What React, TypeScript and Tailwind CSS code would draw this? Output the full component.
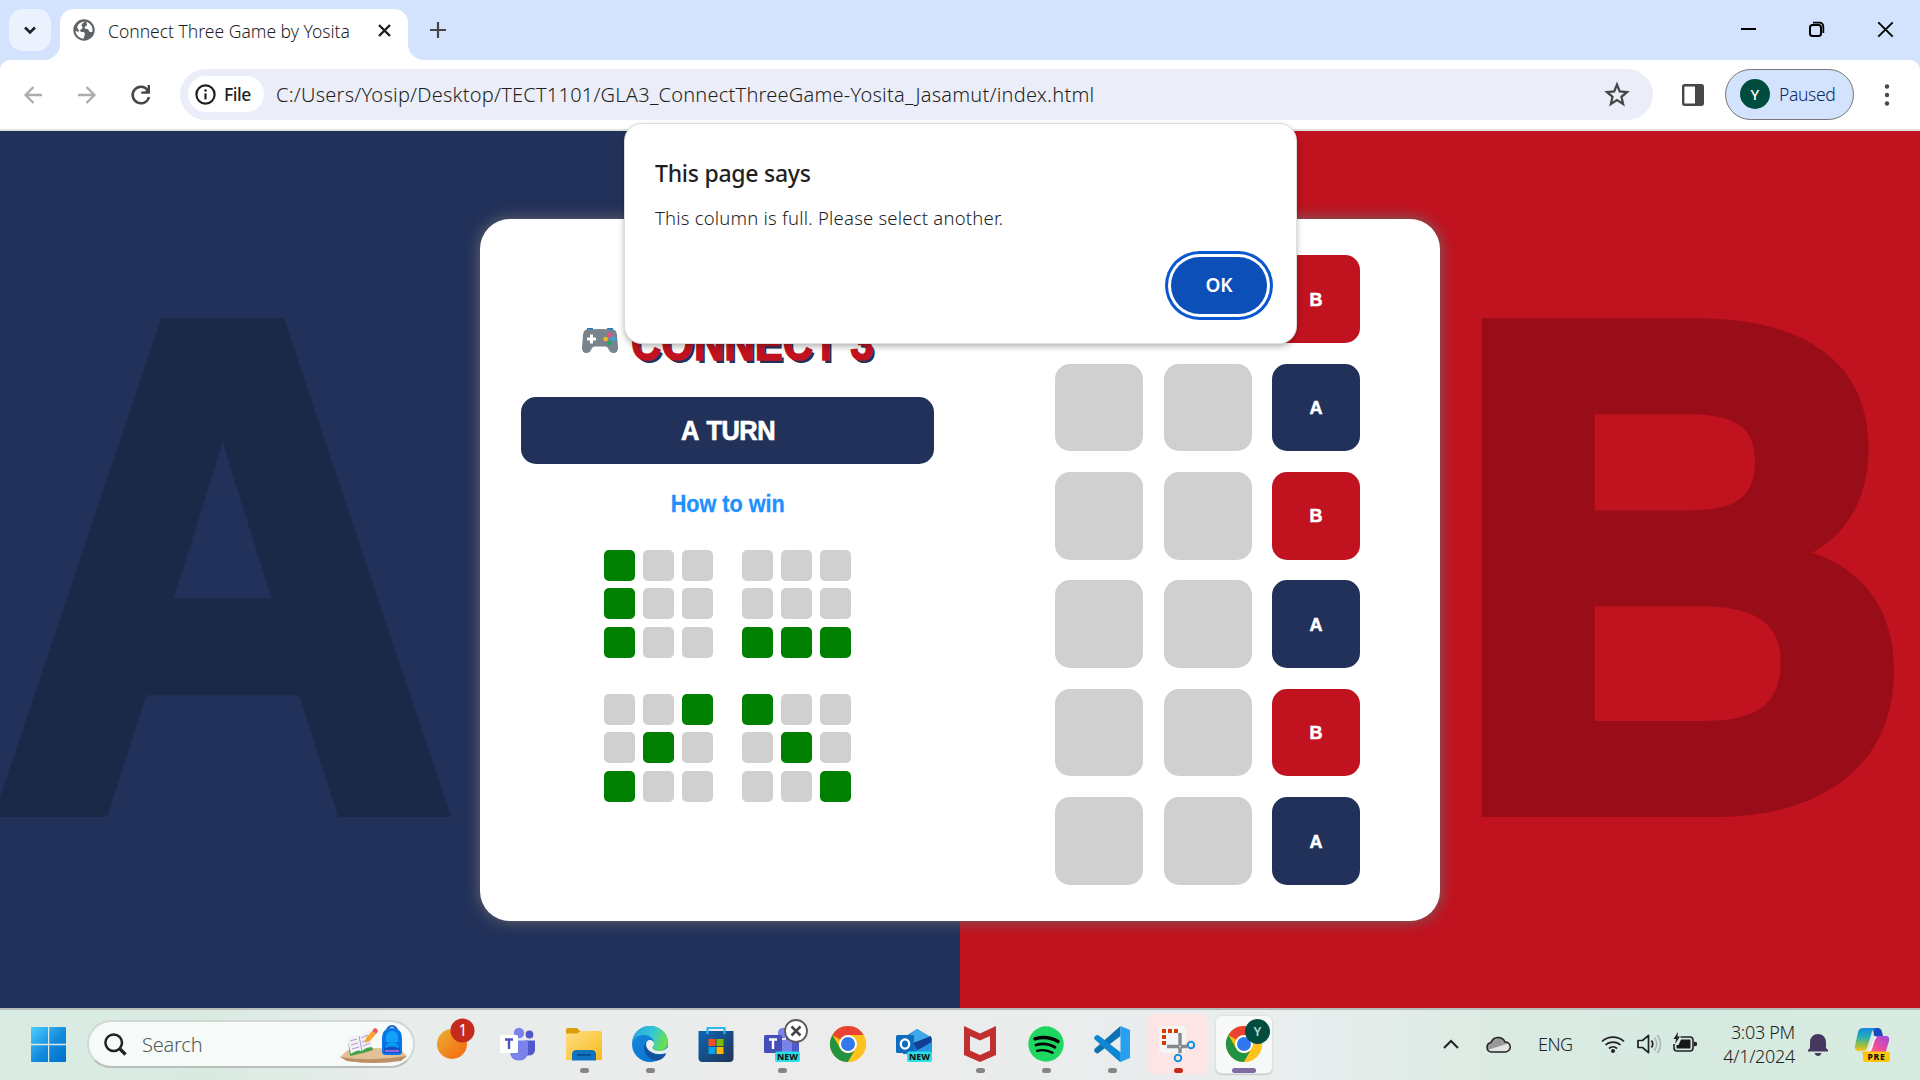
import type { ReactNode } from "react";

const ui = "font-['Noto_Sans','Open_Sans',sans-serif]";

function Svg({ w = 36, h = 36, vb, children, cls = "" }: { w?: number; h?: number; vb?: string; children: ReactNode; cls?: string }) {
  return (
    <svg width={w} height={h} viewBox={vb ?? `0 0 ${w} ${h}`} className={`block shrink-0 overflow-visible ${cls}`} fill="none">
      {children}
    </svg>
  );
}

function TabStrip() {
  return (
    <div className="flex h-[60px] w-full items-start bg-[#d3e3fd]">
      <div className="ml-[9px] mt-[9px] flex h-[42px] w-[42px] items-center justify-center rounded-[14px] bg-[#ebf2fe]">
        <Svg w={14} h={10}><path d="M2 2.5l5 5 5-5" stroke="#1f1f1f" strokeWidth="2.6" /></Svg>
      </div>
      <div className="relative ml-[9px] mt-[9px] flex h-[51px] w-[348px] items-center rounded-t-[14px] bg-white">
        <Svg w={16} h={16} cls="absolute -left-4 bottom-0"><path d="M16 0v16H0A16 16 0 0 0 16 0z" fill="#fff" /></Svg>
        <Svg w={16} h={16} cls="absolute -right-4 bottom-0"><path d="M0 0v16h16A16 16 0 0 1 0 0z" fill="#fff" /></Svg>
        <Svg w={22} h={22} cls="-mt-2.5 ml-[13px]">
          <circle cx="11" cy="11" r="10.7" fill="#5f6368" />
          <path d="M12 2.6c-1.2 1.2-3 1.6-3.4 3.2-.3 1.5 1.3 1.8.8 3.2-.4 1.3-2.2.9-2.3 2.6 0 1.400 1.400 1.400 3 1.500 2 .2 2 2 1.300 3.600-.5 1.200-.6 2.200-.8 3A8.600 8.600 0 0 1 2.400 11.800c1.500 1 3 1.200 4 .1L4 8.400A8.700 8.700 0 0 1 12 2.600z" fill="#fff" />
          <path d="M13.500 2.800a8.600 8.600 0 0 1 6 9.600c-.9.8-2.300.8-3.200 0-1-.9-.6-2-1.900-2.300-1.600-.3-3-.6-2.800-1.900.2-1.200 1.700-.9 2.300-1.900.6-1.100-.8-1.800-.4-3.500z" fill="#fff" />
        </Svg>
        <span className={`${ui} -mt-[7px] ml-[13px] w-[243px] whitespace-nowrap text-[17.500px] font-[350] leading-6 text-[#1f1f1f]`}>Connect Three Game by Yosita</span>
        <Svg w={13} h={13} cls="-mt-2 ml-[27px]"><path d="M1 1l11 11M12 1L1 12" stroke="#1f1f1f" strokeWidth="2.4" /></Svg>
      </div>
      <Svg w={16} h={16} cls="ml-[22px] mt-[22px]"><path d="M8 0v16M0 8h16" stroke="#474747" strokeWidth="2.2" /></Svg>
      <div className="ml-auto mr-[27px] mt-[21px] flex">
        <Svg w={16} h={16} cls="mr-[52px]"><path d="M1 8h15" stroke="#000" strokeWidth="2" /></Svg>
        <Svg w={16} h={16} cls="mr-[53px]">
          <rect x="2" y="4" width="11" height="11" rx="2.5" stroke="#000" strokeWidth="2" />
          <path d="M5 1.600h6.500a3.800 3.800 0 0 1 3.800 3.800V12" stroke="#000" strokeWidth="1.800" />
        </Svg>
        <Svg w={16} h={16}><path d="M1.300 1.300l14.400 14.400M15.700 1.300L1.300 15.700" stroke="#000" strokeWidth="1.900" /></Svg>
      </div>
    </div>
  );
}

function Toolbar() {
  return (
    <div className="flex h-[71px] w-full bg-[#d3e3fd]">
      <div className="flex h-[71px] w-full items-center rounded-t-[10px] border-b-2 border-[#dfe3df] bg-white">
        <Svg w={18} h={18} cls="ml-6"><path d="M18 9H2M9.500 1L1.600 9l7.900 8" stroke="#adadad" strokeWidth="2.400" /></Svg>
        <Svg w={18} h={18} cls="ml-9"><path d="M0 9h16M8.500 1l7.900 8-7.900 8" stroke="#adadad" strokeWidth="2.400" /></Svg>
        <Svg w={20} h={20} cls="ml-[35px]">
          <path d="M16.600 5A8.300 8.300 0 1 0 18 12" stroke="#474747" strokeWidth="2.500" />
          <path d="M17.800 0v7.600h-7.600" stroke="#474747" strokeWidth="2.400" />
          <path d="M18.500 2v6h-6z" fill="#474747" />
        </Svg>
        <div className="-mt-px ml-[29px] flex h-[51px] w-[1473px] items-center rounded-full bg-[#ebeef8]">
          <div className="ml-2 flex h-9 w-[76px] items-center rounded-full bg-white">
            <Svg w={21} h={21} cls="ml-[7px]">
              <circle cx="10.500" cy="10.500" r="9.100" stroke="#1f1f1f" strokeWidth="2.200" />
              <path d="M10.500 9.400v6" stroke="#1f1f1f" strokeWidth="2.200" />
              <circle cx="10.500" cy="6.500" r="1.300" fill="#1f1f1f" />
            </Svg>
            <span className={`${ui} ml-2 text-[17.500px] font-medium leading-6 tracking-[-0.500px] text-[#1f1f1f]`}>File</span>
          </div>
          <span className={`${ui} ml-3 mt-0.5 whitespace-nowrap text-[20px] font-[350] leading-7 tracking-[0.230px] text-[#1f1f1f]`}>C:/Users/Yosip/Desktop/TECT1101/GLA3_ConnectThreeGame-Yosita_Jasamut/index.html</span>
          <Svg w={24} h={24} vb="2 1.500 20 20" cls="ml-auto mr-6">
            <path d="M12 3.700l2.300 5.700 6 .5-4.600 3.900 1.400 6L12 16.600l-5.100 3.200 1.400-6L3.700 9.900l6-.5z" stroke="#474747" strokeWidth="1.900" />
          </Svg>
        </div>
        <Svg w={22} h={22} cls="ml-[29px]">
          <rect x="1.200" y="1.200" width="19.600" height="19.600" rx="1.500" stroke="#474747" strokeWidth="2.400" />
          <path d="M13 1h8v20h-8z" fill="#474747" />
        </Svg>
        <div className="-mt-px ml-[21px] flex h-[51px] w-[129px] items-center rounded-full border border-[#747775] bg-[#d3e3fd]">
          <span className={`${ui} ml-3.5 flex h-[30px] w-[30px] items-center justify-center rounded-full bg-[#004d40] text-[15px] font-medium text-white`}>Y</span>
          <span className={`${ui} ml-[9px] text-[17.500px] font-[350] leading-6 tracking-[-0.350px] text-[#0a2a66]`}>Paused</span>
        </div>
        <Svg w={6} h={22} cls="ml-[30px]">
          <circle cx="3" cy="2.500" r="2.200" fill="#474747" /><circle cx="3" cy="11" r="2.200" fill="#474747" /><circle cx="3" cy="19.500" r="2.200" fill="#474747" />
        </Svg>
      </div>
    </div>
  );
}

const patterns = [
  [1, 0, 0, 1, 0, 0, 1, 0, 0],
  [0, 0, 0, 0, 0, 0, 1, 1, 1],
  [0, 0, 1, 0, 1, 0, 1, 0, 0],
  [1, 0, 0, 0, 1, 0, 0, 0, 1],
];

function Mini({ cells }: { cells: number[] }) {
  return (
    <div className="grid grid-cols-[31px_31px_31px] gap-[7.800px]">
      {cells.map((c, i) => (
        <div key={i} className={c ? "h-[31px] rounded-[5px] bg-[#008000]" : "h-[31px] rounded-[5px] bg-[#d0d0d0]"} />
      ))}
    </div>
  );
}

const rows = ["B", "A", "B", "A", "B", "A"];

function Gamepad() {
  return (
    <Svg w={36} h={26} cls="mb-[11px] -ml-px">
      <path d="M5 0h6v4H5zM25 0h6v4h-6z" fill="#1c7fd0" />
      <path d="M5 1.500Q18 .3 31 1.500q3.500.4 4 5.500l1 12.500q0 5.500-4.500 5.500-3.500 0-5-4-1-2.500-3-2.500h-11q-2 0-3 2.500-1.500 4-5 4Q0 25 0 19.500L1 7q.5-5.100 4-5.500z" fill="#78838c" />
      <path d="M9.500 6.500v9M5 11h9" stroke="#fff" strokeWidth="3" />
      <circle cx="27.500" cy="7" r="2.300" fill="#f0508a" /><circle cx="23.700" cy="11" r="2.300" fill="#f5b921" />
      <circle cx="31.300" cy="11" r="2.300" fill="#2aa7ee" /><circle cx="27.500" cy="15" r="2.300" fill="#1fa463" />
    </Svg>
  );
}

function Game() {
  return (
    <div className="relative flex h-[877px] w-full font-['Liberation_Sans',Arial,sans-serif] font-bold">
      <div className="flex w-1/2 bg-[#22315a]">
        <span className="-ml-2 mt-[35px] block h-[800px] w-[480px] origin-left scale-x-[0.922] text-[693px] leading-[800px] text-[#1b2847] [-webkit-text-stroke:22px_#1b2847]">A</span>
      </div>
      <div className="flex w-1/2 justify-end bg-[#c1121f]">
        <span className="mt-[35px] block h-[800px] w-[471px] origin-left scale-x-[0.927] text-[693px] leading-[800px] text-[#990d18] [-webkit-text-stroke:22px_#990d18]">B</span>
      </div>
      <div className="absolute left-[480px] top-[88px] flex h-[702px] w-[960px] rounded-[30px] bg-white shadow-[0_0_15px_#696969]">
        <div className="flex w-[495px] flex-col items-center">
          <div className="mt-[96px] flex h-[50px] w-[290px] items-end">
            <Gamepad />
            <span className="ml-[13px] block origin-left scale-x-[0.840] whitespace-nowrap text-[50px] font-black leading-[43px] text-[#c1121f] [-webkit-text-stroke:1.500px_#c1121f] [text-shadow:3px_3px_0_#22315a]">CONNECT 3</span>
          </div>
          <div className="mt-8 flex h-[67px] w-[413px] items-center justify-center rounded-[15px] bg-[#22315a]">
            <span className="mt-0.5 scale-x-[0.940] text-[27px] tracking-[-0.500px] text-white [-webkit-text-stroke:0.700px_white] [word-spacing:2px]">A TURN</span>
          </div>
          <div className="mt-[25px] scale-x-[0.940] text-[23px] leading-[30px] text-[#1e90ff] [-webkit-text-stroke:0.300px_#1e90ff]">How to win</div>
          <div className="mt-[30.500px] grid grid-cols-[108.600px_108.600px] gap-x-[29.800px] gap-y-[35.500px]">
            {patterns.map((p, i) => <Mini key={i} cells={p} />)}
          </div>
        </div>
        <div className="ml-20 mt-[36.300px] grid h-fit grid-cols-[88px_88px_88px] gap-x-[20.500px] gap-y-[20.900px]">
          {rows.map((r, i) => [
            <div key={`${i}l`} className="h-[87.500px] rounded-[15px] bg-[#d0d0d0]" />,
            <div key={`${i}m`} className="h-[87.500px] rounded-[15px] bg-[#d0d0d0]" />,
            <div key={`${i}r`} className={r === "A" ? "flex h-[87.500px] items-center justify-center rounded-[15px] bg-[#22315a] pt-0.5 text-[18px] text-white [-webkit-text-stroke:0.500px_white]" : "flex h-[87.500px] items-center justify-center rounded-[15px] bg-[#c1121f] pt-0.5 text-[18px] text-white [-webkit-text-stroke:0.500px_white]"}>{r}</div>,
          ])}
        </div>
      </div>
      <div className={`${ui} absolute left-[625px] top-[-7px] flex h-[219px] w-[671px] flex-col rounded-[17px] bg-white px-[30px] font-normal text-[#1f1f1f] shadow-[0_0_0_1px_#dedede,0_3px_7px_rgba(0,0,0,0.350)]`}>
        <div className="mt-[33px] text-[23px] font-medium leading-8 tracking-[-0.260px]">This page says</div>
        <div className="mt-[17px] text-[18.500px] font-[350] leading-6 tracking-[0.210px]">This column is full. Please select another.</div>
        <div className="-mr-px mt-[27px] flex h-[57px] w-[96px] items-center justify-center self-end rounded-full bg-[#0d4fb9] text-[19px] font-semibold text-white shadow-[0_0_0_3px_white,0_0_0_6px_#0b57d0]">OK</div>
      </div>
    </div>
  );
}

function ChromeIcon() {
  return (
    <Svg>
      <circle cx="18" cy="18" r="18" fill="#fbbc05" />
      <path d="M18 0A18 18 0 0 1 33.600 9H18a9 9 0 0 0-7.800 4.500L2.400 9A18 18 0 0 1 18 0z" fill="#ea4335" />
      <path d="M2.400 9A18 18 0 0 0 18 36l7.800-13.500A9 9 0 0 1 10.200 22.500z" fill="#229342" />
      <path d="M33.600 9A18 18 0 0 1 18 36l7.800-13.500A9 9 0 0 0 18 9z" fill="#fcc31e" />
      <circle cx="18" cy="18" r="9" fill="#fff" /><circle cx="18" cy="18" r="7" fill="#3178ee" />
    </Svg>
  );
}

function NewTag({ x }: { x: number }) {
  return (
    <>
      <rect x={x} y="25.500" width="25" height="10.500" rx="2" fill="#28e0e3" />
      <text x={x + 12.500} y="34" textAnchor="middle" fontSize="8.800" fontWeight="800" fill="#111" fontFamily="Noto Sans">NEW</text>
    </>
  );
}

const icons: { dot?: string; active?: string; node: ReactNode }[] = [
  {
    node: (
      <Svg>
        <defs><linearGradient id="org" x1="0" y1="0" x2="1" y2="1"><stop stopColor="#e9b232" /><stop offset="1" stopColor="#f6650d" /></linearGradient></defs>
        <circle cx="18" cy="18" r="15" fill="url(#org)" />
        <circle cx="28.500" cy="4.500" r="12" fill="#c42b1c" />
        <text x="29" y="10" textAnchor="middle" fontSize="15.500" fill="#fff" fontFamily="Noto Sans">1</text>
      </Svg>
    ),
  },
  {
    node: (
      <Svg>
        <circle cx="19" cy="7" r="5.200" fill="#7b83eb" /><circle cx="29.500" cy="8.500" r="3.900" fill="#5059c9" />
        <path d="M25 14.500h10v9q0 6-7 6h-3z" fill="#5059c9" />
        <path d="M10 14.500h18v11q0 9-9 9t-9-9z" fill="#7b83eb" />
        <rect x="0" y="9" width="18" height="18" rx="1.500" fill="#fff" />
        <path d="M5 13.500h8M9 13.500v9.500" stroke="#4b53bc" strokeWidth="2.400" />
      </Svg>
    ),
  },
  {
    dot: "gray",
    node: (
      <Svg>
        <defs><linearGradient id="fol" x1="0" y1="0" x2="1" y2="1"><stop stopColor="#ffe084" /><stop offset="1" stopColor="#f8b91c" /></linearGradient></defs>
        <path d="M0 4q0-2 2-2h9l4 4v5H0z" fill="#dc9f0b" />
        <path d="M0 7.500h11l4-2.500h19q2 0 2 2v27H0z" fill="url(#fol)" />
        <path d="M6 34.500v-6q0-4.500 4.500-4.500h15q4.500 0 4.500 4.500v6z" fill="#0f73bf" />
        <path d="M11 29h14" stroke="#0a4f92" strokeWidth="2" />
      </Svg>
    ),
  },
  {
    dot: "gray",
    node: (
      <Svg>
        <defs>
          <linearGradient id="e1" x1="0" y1="0" x2="1" y2=".3"><stop stopColor="#259fe0" /><stop offset=".6" stopColor="#35c9d5" /><stop offset="1" stopColor="#67df55" /></linearGradient>
          <linearGradient id="e2" x1="0" y1="0" x2=".6" y2="1"><stop stopColor="#168ce0" /><stop offset="1" stopColor="#0a72ce" /></linearGradient>
        </defs>
        <circle cx="18" cy="18" r="18" fill="url(#e2)" />
        <path d="M.3 16C1 6 9 0 18 0c11 0 18 8 18 15.500 0 6-4 9.500-9 9.500-5 0-6.500-2-6.500-3s1.500-1.500 1.500-4.500C22 12 17 9 12 9 7 9 2.500 11 .3 16z" fill="url(#e1)" />
        <path d="M14.500 16c-2 2-3 5-2 9 1.500 5.500 7 9.500 13 9.500 3 0 7-3 8.800-7-2 .8-4 1.200-6.500 1.200-7 0-12-4-13.300-12.700z" fill="#11529c" />
        <path d="M14 18.500c0-2.500 1.700-4.500 4-4.500 3 0 4.300 2.500 4 4.500-.3 2-1.500 2-1.500 3 0 2 3 3.500 6.500 3.500 3.500 0 6.500-1.200 8.500-3.500l.8.500-2 4.500c-2 1.200-5.200 1.700-8 1.500-7-.5-12.300-4.500-12.300-9.500z" fill="#eceeee" />
      </Svg>
    ),
  },
  {
    node: (
      <Svg>
        <defs><linearGradient id="sto" x1="0" y1="0" x2="1" y2="1"><stop stopColor="#0b66b5" /><stop offset="1" stopColor="#233355" /></linearGradient></defs>
        <path d="M.5 5h35v27q0 4-4 4h-27q-4 0-4-4z" fill="url(#sto)" />
        <path d="M9.500 8V2h17v6" stroke="#2bb8ef" strokeWidth="2.200" />
        <path d="M10.500 13h7v7h-7z" fill="#f25022" /><path d="M18.500 13h7v7h-7z" fill="#7fba00" /><path d="M10.500 21h7v7h-7z" fill="#00a4ef" /><path d="M18.500 21h7v7h-7z" fill="#ffb900" />
      </Svg>
    ),
  },
  {
    dot: "gray",
    node: (
      <Svg>
        <circle cx="19" cy="7" r="5.200" fill="#7b83eb" />
        <path d="M22 12h13v14H22z" fill="#5059c9" /><path d="M12 14h16v13H12z" fill="#7b83eb" />
        <rect x="0" y="9" width="18" height="18" rx="1.500" fill="#464eb8" />
        <path d="M5 13.500h8M9 13.500v9.500" stroke="#fff" strokeWidth="2.400" />
        <NewTag x={11} />
        <circle cx="32" cy="5" r="11" fill="#fff" stroke="#5b5b5b" strokeWidth="1.800" />
        <path d="M27.500.5l9 9M36.500.5l-9 9" stroke="#444" strokeWidth="2.500" />
      </Svg>
    ),
  },
  { node: <ChromeIcon /> },
  {
    node: (
      <Svg>
        <path d="M7 12L21 3l15 9v16H7z" fill="#1577cb" />
        <path d="M11 11l10-8 14 8-16 9z" fill="#40a8e8" />
        <path d="M17 17L35 10v6L22 25z" fill="#123f91" />
        <path d="M20 25l16-9v14H20z" fill="#2398e3" />
        <rect x="0" y="9" width="18" height="18" rx="1.500" fill="#0f6cbd" />
        <ellipse cx="9" cy="18" rx="4.200" ry="4.700" stroke="#fff" strokeWidth="2.300" />
        <NewTag x={11} />
      </Svg>
    ),
  },
  { dot: "gray", node: <Svg><path d="M2 0l16 7.500L34 0v29L18 36 2 29zM8 10v14.500l10 4.500 10-4.500V10l-10 4.500z" fill="#c12f30" fillRule="evenodd" /></Svg> },
  {
    dot: "gray",
    node: (
      <Svg>
        <circle cx="18" cy="18" r="17.700" fill="#1ed760" />
        <path d="M7 12.800c8-2.300 16-1.300 23 2.600" stroke="#000" strokeWidth="3.400" strokeLinecap="round" />
        <path d="M8 19c7-2 13.500-1 19 2.300" stroke="#000" strokeWidth="2.800" strokeLinecap="round" />
        <path d="M9 24.800c5.500-1.400 11-.8 15.500 2" stroke="#000" strokeWidth="2.300" strokeLinecap="round" />
      </Svg>
    ),
  },
  {
    dot: "gray",
    node: (
      <Svg>
        <path d="M26.500 0v10L4.500 27q-1.500 1-3-.5l-1-1q-1-1.500.5-3z" fill="#0b72b5" />
        <path d="M.8 13.500q-1.500-1.500 0-3l1-1q1.300-1 3 0l22 17V36q-1 0-2-1z" fill="#0f87d2" />
        <path d="M26.500 0L36 4v28l-9.500 4z" fill="#27a0f0" />
      </Svg>
    ),
  },
  {
    dot: "red",
    active: "pink",
    node: (
      <Svg>
        <rect x="-1" y="0" width="27" height="27" rx="3" fill="#f4f4f5" />
        <path d="M2 3h4v4H2zM8 3h4v4H8zM14 3h4v4h-4zM2 9h4v4H2zM2 15h4v4H2z" fill="#d83b01" />
        <path d="M20 7v20M7 20.500h20" stroke="#85898d" strokeWidth="3.400" />
        <circle cx="31" cy="19" r="3.300" stroke="#1592dc" strokeWidth="2" /><circle cx="18" cy="32" r="3.300" stroke="#1592dc" strokeWidth="2" />
        <circle cx="20" cy="20.500" r="1" fill="#ddd" />
      </Svg>
    ),
  },
  {
    dot: "violet",
    active: "white",
    node: (
      <div className="relative">
        <ChromeIcon />
        <span className={`${ui} absolute -right-2 -top-[7px] flex h-[25px] w-[25px] items-center justify-center rounded-full bg-[#004d40] text-[13px] font-semibold text-[#b9d5ce]`}>Y</span>
      </div>
    ),
  },
];

function TaskIcon({ icon }: { icon: (typeof icons)[number] }) {
  const bg = icon.active === "pink"
    ? "mt-1 flex h-[60px] w-[60px] flex-col items-center rounded-[6px] bg-[#fde5e6] pt-3"
    : icon.active === "white"
      ? "mt-1.5 flex h-[57px] w-[56px] flex-col items-center rounded-[6px] bg-[#f7f9f8] pt-2.5 shadow-[0_0_0_1px_#dfe3e1,0_1px_1px_1px_#c9c9c9]"
      : "mt-1 flex h-[60px] w-[60px] flex-col items-center pt-3";
  return (
    <div className="flex w-[66px] shrink-0 justify-center">
      <div className={bg}>
        {icon.node}
        {icon.dot && <div className={icon.dot === "violet" ? "mt-1.5 h-[5px] w-6 rounded-full bg-[#7f6ca1]" : icon.dot === "red" ? "mt-1.5 h-[5px] w-[9px] rounded-full bg-[#c42b1c]" : "mt-1.5 h-[5px] w-[9px] rounded-full bg-[#858585]"} />}
      </div>
    </div>
  );
}

function Taskbar() {
  return (
    <div className="flex h-[72px] w-full items-start border-t-2 border-[#b5bcb9] bg-[linear-gradient(90deg,#d9ece3_0%,#d9ebe1_11%,#e8eceb_20%,#ececec_45%,#e8edee_68%,#dbebe2_78%,#d6eae1_88%,#d8ebe0_100%)]">
      <Svg w={35} h={35} cls="ml-[31px] mt-[17px]">
        <defs><linearGradient id="win" gradientUnits="userSpaceOnUse" x1="0" y1="0" x2="35" y2="35"><stop stopColor="#4bcfff" /><stop offset=".55" stopColor="#1389dc" /><stop offset="1" stopColor="#0070cc" /></linearGradient></defs>
        <path d="M1 0h16v16.800H0V1q0-1 1-1zM18.200 0H34q1 0 1 1v15.800H18.200zM0 18.200h17V35H1q-1 0-1-1zM18.200 18.200H35V34q0 1-1 1H18.200z" fill="url(#win)" />
      </Svg>
      <div className="ml-[21px] mt-[10px] flex h-[48px] w-[328px] items-center rounded-full border-2 border-[#d2d8d5] border-b-[#b9bfbd] bg-[#f6faf8]">
        <Svg w={23} h={23} cls="ml-[15px]"><circle cx="9.700" cy="9.700" r="8.300" stroke="#222" strokeWidth="2.500" /><path d="M15.500 15.500l6 6" stroke="#222" strokeWidth="3.200" /></Svg>
        <span className={`${ui} ml-[15px] mt-0.5 text-[20px] font-[350] leading-7 tracking-[-0.200px] text-[#555b59]`}>Search</span>
        <Svg w={68} h={40} cls="ml-auto mr-[5px] mt-1">
          <path d="M0 31l8-7q26-4 53 0l6 6-6 4q-27 5-54 1z" fill="#e3c095" />
          <path d="M0 31q33 5 67-1l-6 5q-27 4-54 0z" fill="#bd8f66" />
          <path d="M8 15l2 15 13-3 10-3-1-3-3-15z" fill="#42a047" />
          <path d="M7 12q7-4 12-2 4-5 10-5l4 16q-7 0-11 4-5-2-11 3z" fill="#f3f0fa" />
          <path d="M19 10l3 15M10 15l7-2M11 19l7-2M12 23l7-2M21 12l7-3M22 16l7-3M23 20l7-3" stroke="#aaa1bd" />
          <path d="M25 17l1-5 6-7 4 3-6 7z" fill="#f6a531" /><path d="M32 5l2.500-3q3 0 3.500 3.500L36 8z" fill="#f25c63" />
          <path d="M47 3q5-6 10 0" stroke="#1768c5" strokeWidth="2" />
          <path d="M42 13q0-11 10-11t10 11v13q0 3-4 3H46q-4 0-4-3z" fill="#0876ea" />
          <path d="M46 12q0-7 6-7t6 7v4H46z" fill="#13a1f8" />
          <path d="M44 22q0-6 8-6t8 6v5H44z" fill="#1552c6" /><path d="M45 21q1-5 7-5t7 5v1q-7-3-14 0z" fill="#0b9af5" /><path d="M45 25h14" stroke="#a66de8" strokeWidth="1.800" />
        </Svg>
      </div>
      <div className="ml-1 flex">{icons.map((icon, i) => <TaskIcon key={i} icon={icon} />)}</div>
      <div className={`${ui} ml-auto flex h-[68px] items-center font-[350] text-[#1d2321]`}>
        <Svg w={16} h={10}><path d="M0 9l7-7 7 7" stroke="#222" strokeWidth="2" /></Svg>
        <Svg w={25} h={17} cls="ml-[26px]">
          <path d="M5.500 16A4.800 4.800 0 0 1 5 6.500 7.500 7.500 0 0 1 19 6a5 5 0 0 1 .5 10z" fill="#e5e5e5" />
          <path d="M1.500 14A4.800 4.800 0 0 1 5 6.500 7.500 7.500 0 0 1 19 6l3 1.500z" fill="#999" />
          <path d="M5.500 16A4.800 4.800 0 0 1 5 6.500 7.500 7.500 0 0 1 19 6a5 5 0 0 1 .5 10z" stroke="#222" strokeWidth="1.500" />
        </Svg>
        <span className="ml-[27px] w-[37px] text-[18px] tracking-[-0.500px]">ENG</span>
        <Svg w={24} h={18} cls="ml-[26px]"><path d="M1 6.500a16 16 0 0 1 22 0M4.500 10a11 11 0 0 1 15 0M8 13.500a6 6 0 0 1 8 0" stroke="#222" strokeWidth="1.700" /><circle cx="12" cy="16" r="2" fill="#222" /></Svg>
        <Svg w={25} h={20} cls="ml-3">
          <path d="M1 6.500h4.500l6-5.200v17.400l-6-5.200H1z" stroke="#222" strokeWidth="1.700" strokeLinejoin="round" />
          <path d="M14.500 6.500a6 6 0 0 1 0 7" stroke="#222" strokeWidth="1.700" /><path d="M17.500 3.500q4.500 6.500 0 13M20.500 1q6 9 0 18" stroke="#a8b5af" strokeWidth="1.500" />
        </Svg>
        <Svg w={24} h={20} cls="ml-[11px] -mt-1">
          <path d="M7.500 5H17q3 0 3 3v8q0 3-3 3H4q-3 0-3-3v-4" stroke="#222" strokeWidth="1.600" /><path d="M8 7.500h9.500v9H3.500v-3.500h2z" fill="#161b19" /><path d="M21 9.500l3 1v3l-3 1zM5 0L.5 7H3L2 12l5-7.500H4.500z" fill="#222" />
        </Svg>
        <div className="ml-[24px] flex w-[74px] flex-col items-end whitespace-nowrap text-[18px] leading-6 tracking-[-0.300px]"><div>3:03 PM</div><div>4/1/2024</div></div>
        <Svg w={20} h={23} cls="ml-[13px]"><path d="M2 15V9a8 8 0 0 1 16 0v6l2 2v1.500H0V17zM6.500 20h7q-1 3-3.500 3t-3.500-3z" fill="#46375f" /></Svg>
      </div>
      <Svg w={36} h={36} cls="ml-[27px] mr-[29px] mt-4">
        <defs>
          <linearGradient id="cp1" x1="0" y1="0" x2="0" y2="1"><stop stopColor="#1688dc" /><stop offset=".4" stopColor="#28aebb" /><stop offset=".75" stopColor="#9cbe3c" /><stop offset="1" stopColor="#f7c31e" /></linearGradient>
          <linearGradient id="cp2" x1="1" y1="0" x2="0" y2="1"><stop stopColor="#a04be0" /><stop offset=".5" stopColor="#f04b9a" /><stop offset="1" stopColor="#ff8a55" /></linearGradient>
        </defs>
        <path d="M18 2h5q3 0 4 4l1 4h-9z" fill="#1b4bc0" />
        <path d="M8 2h13q-3 1-4 4l-5 16q-1 3-4 3H4q-5 0-4-5L3 6q1-4 5-4z" fill="url(#cp1)" />
        <path d="M29 10h2q4 0 3 5l-3 10q-1 5-5 5H12q-3 0-5-4h4q3 0 4-3l3-9q1-4 5-4z" fill="url(#cp2)" />
        <path d="M19 11h3q-2 2-3 6l-2 6q-1 3-4 3h-2q3-1 4-4z" fill="#f3f7f5" />
        <rect x="8" y="25.500" width="27" height="10.500" rx="2" fill="#ffc60a" />
        <text x="21.500" y="34" textAnchor="middle" fontSize="8.600" fontWeight="800" letterSpacing=".7" fill="#111" fontFamily="Noto Sans">PRE</text>
      </Svg>
    </div>
  );
}

export default function App() {
  return (
    <div className="flex h-[1080px] w-[1920px] flex-col overflow-hidden bg-white">
      <TabStrip />
      <Toolbar />
      <Game />
      <Taskbar />
    </div>
  );
}
